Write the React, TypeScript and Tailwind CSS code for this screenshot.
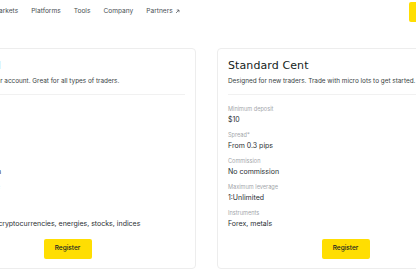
import React from 'react';

const navItems = ['Markets', 'Platforms', 'Tools', 'Company'];

type Spec = { label: string; value: string };

const accounts: { title: string; description: string; specs: Spec[] }[] = [
  {
    title: 'Standard',
    description: 'Our most popular account. Great for all types of traders.',
    specs: [
      { label: 'Minimum deposit', value: '$10' },
      { label: 'Spread*', value: 'From 0.2 pips' },
      { label: 'Commission', value: 'No commission' },
      { label: 'Maximum leverage', value: '1:Unlimited' },
      { label: 'Instruments', value: 'Forex, metals, cryptocurrencies, energies, stocks, indices' },
    ],
  },
  {
    title: 'Standard Cent',
    description: 'Designed for new traders. Trade with micro lots to get started.',
    specs: [
      { label: 'Minimum deposit', value: '$10' },
      { label: 'Spread*', value: 'From 0.3 pips' },
      { label: 'Commission', value: 'No commission' },
      { label: 'Maximum leverage', value: '1:Unlimited' },
      { label: 'Instruments', value: 'Forex, metals' },
    ],
  },
];

function AccountCard({ title, description, specs }: (typeof accounts)[number]) {
  return (
    <div className="w-[257px] shrink-0 h-[221px] rounded-[4px] border border-[#ededed] bg-white px-[10px] pt-[10px] flex flex-col">
      <h3 className="text-[11px] leading-[14px] font-medium text-[#141d22] tracking-[0.1px] whitespace-nowrap [font-family:'DejaVu_Sans',sans-serif]">
        {title}
      </h3>
      <p className="mt-[4px] text-[6.4px] leading-[9px] text-[#3a3f44] whitespace-nowrap">{description}</p>
      <div className="mt-[8px] h-px bg-[#f1f1f1]" />
      <div className="mt-[10px] flex flex-col gap-[6px]">
        {specs.map((s) => (
          <div key={s.label} className="flex flex-col gap-[1px]">
            <span className="text-[5.6px] leading-[9px] text-[#a3a6aa]">{s.label}</span>
            <span className="text-[7px] leading-[10px] text-[#2a2f33] whitespace-nowrap">{s.value}</span>
          </div>
        ))}
      </div>
      <div className="flex justify-center mt-[10px]">
        <button className="w-[48px] h-[20px] rounded-[2px] bg-[#ffde02] text-[6.5px] font-medium text-[#141d22]">
          Register
        </button>
      </div>
    </div>
  );
}

export default function App() {
  return (
    <div className="w-[416px] h-[280px] overflow-hidden bg-white [font-family:Inter,'Liberation_Sans',sans-serif]">
      <header className="h-[22px] flex items-center justify-between pt-[1px]">
        <nav className="ml-[-7px] flex items-center gap-[13px] text-[6.6px] text-[#4a4f54]">
          {navItems.map((n) => (
            <span key={n}>{n}</span>
          ))}
          <span className="flex items-center gap-[2px]">
            Partners
            <svg width="5" height="5" viewBox="0 0 10 10" fill="none" stroke="#4a4f54" strokeWidth="1.4">
              <path d="M2 8 L8 2 M3.5 2 H8 V6.5" />
            </svg>
          </span>
        </nav>
        <div className="w-[20px] h-[20px] mr-[-13px] self-start mt-[1px] rounded-[2px] bg-[#ffde02]" />
      </header>
      <main className="mt-[26px] ml-[-61px] flex gap-[21px]">
        {accounts.map((a) => (
          <AccountCard key={a.title} {...a} />
        ))}
      </main>
    </div>
  );
}
